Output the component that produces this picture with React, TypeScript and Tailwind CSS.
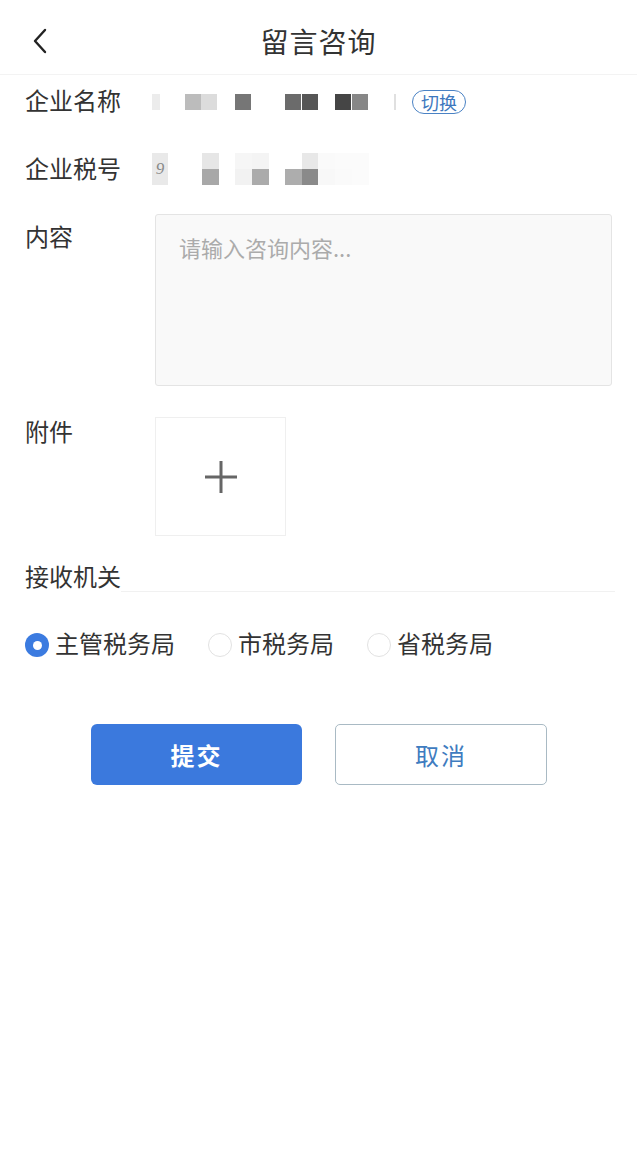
import React from "react";

const FONT = { fontFamily: '"Noto Sans CJK SC", "Noto Sans", sans-serif' };

// pixelated (redacted) blocks: [left, color]
const nameBlocks: [number, string][] = [
  [152, "#ececec"],
  [185, "#bcbcbc"],
  [201, "#dcdcdc"],
  [235, "#767676"],
  [285, "#6b6b6b"],
  [302, "#565656"],
  [335, "#454545"],
  [352, "#878787"],
];

const taxTop: [number, string][] = [
  [202, "#e6e6e6"],
  [235, "#f6f6f6"],
  [252, "#f4f4f4"],
  [302, "#e8e8e8"],
  [318, "#fafafa"],
  [335, "#fbfbfb"],
  [352, "#fbfbfb"],
];
const taxBottom: [number, string][] = [
  [202, "#a8a8a8"],
  [235, "#f2f2f2"],
  [252, "#ababab"],
  [285, "#adadad"],
  [302, "#8a8a8a"],
  [318, "#f8f8f8"],
  [335, "#fafafa"],
  [352, "#fbfbfb"],
];

function Radio({ checked, label }: { checked?: boolean; label: string }) {
  return (
    <div className="flex items-center gap-[6px]">
      {checked ? (
        <span className="w-[24px] h-[24px] rounded-full bg-[#3b7be0] flex items-center justify-center">
          <span className="w-[9px] h-[9px] rounded-full bg-white" />
        </span>
      ) : (
        <span className="w-[24px] h-[24px] rounded-full border border-[#e2e2e2] bg-white" />
      )}
      <span className="text-[24px] leading-[30px] text-[#333] mt-[-4px]">{label}</span>
    </div>
  );
}

export default function App() {
  return (
    <div className="w-[637px] h-[1158px] bg-white text-[#333] relative" style={FONT}>
      {/* header */}
      <div className="h-[75px] flex items-center px-[26px] border-b border-[#f3f3f3] relative">
        <svg width="20" height="26" viewBox="0 0 20 26" className="ml-[5px] mt-[8px]">
          <path d="M14 2 L4 13 L14 24" fill="none" stroke="#222" strokeWidth="2.4" strokeLinecap="round" strokeLinejoin="round" />
        </svg>
        <div className="absolute left-0 right-0 top-0 h-[75px] flex items-center justify-center pointer-events-none">
          <span className="text-[28px] leading-[34px] text-[#333] mt-[6px] tracking-[1px]">留言咨询</span>
        </div>
      </div>

      {/* 企业名称 */}
      <div className="h-[53px] flex items-center pl-[25px]">
        <span className="w-[130px] text-[24px] leading-[30px] mt-[-3px]">企业名称</span>
        <div className="relative h-[16px] w-[245px]">
          {nameBlocks.map(([x, c]) => (
            <span
              key={x}
              className="absolute top-0 h-[16px] w-[16px]"
              style={{ left: x - 155, backgroundColor: c, width: x === 152 ? 8 : 16 }}
            />
          ))}
          <span className="absolute top-0 h-[16px] w-[2px] bg-[#e0e0e0]" style={{ left: 394 - 155 }} />
        </div>
        <span className="ml-[12px] px-[8px] h-[24px] flex items-center rounded-full border border-[#4a82c4] text-[#3d78be] text-[18px] leading-none">
          切换
        </span>
      </div>

      {/* 企业税号 */}
      <div className="h-[84px] flex items-center pl-[25px]">
        <span className="w-[130px] text-[24px] leading-[30px] mt-[-5px]">企业税号</span>
        <div className="relative h-[32px] w-[230px] -ml-[3px] mt-[-2px]">
          <span className="absolute left-0 top-0 w-[16px] h-[32px] bg-[#e9e9e9] text-[#888] text-[17px] flex items-center justify-center italic" style={{ fontFamily: '"Liberation Serif", serif' }}>
            9
          </span>
          {taxTop.map(([x, c]) => (
            <span key={"t" + x} className="absolute top-0 h-[16px] w-[17px]" style={{ left: x - 152, backgroundColor: c }} />
          ))}
          {taxBottom.map(([x, c]) => (
            <span key={"b" + x} className="absolute top-[16px] h-[16px] w-[17px]" style={{ left: x - 152, backgroundColor: c }} />
          ))}
        </div>
      </div>

      {/* 内容 */}
      <div className="flex pl-[25px] mt-[2px]">
        <span className="w-[130px] text-[24px] leading-[30px] mt-[7px]">内容</span>
        <div className="w-[457px] h-[172px] bg-[#f9f9f9] border border-[#e4e4e4] rounded-[3px] px-[23px] pt-[17px]">
          <span className="text-[22px] leading-[30px] text-[#ababab]">请输入咨询内容...</span>
        </div>
      </div>

      {/* 附件 */}
      <div className="flex pl-[25px] mt-[31px]">
        <span className="w-[130px] text-[24px] leading-[30px] mt-[-1px]">附件</span>
        <div className="w-[131px] h-[119px] border border-[#efefef] flex items-center justify-center">
          <svg width="34" height="34" viewBox="0 0 34 34">
            <path d="M17 1 V33 M1 17 H33" stroke="#666" strokeWidth="3" />
          </svg>
        </div>
      </div>

      {/* 接收机关 */}
      <div className="flex items-end pl-[25px] mt-[25px]">
        <span className="text-[24px] leading-[30px]">接收机关</span>
        <div className="flex-1 mr-[22px] border-b border-[#f1f1f1] mb-[-1px]" />
      </div>

      {/* radios */}
      <div className="flex items-center pl-[25px] mt-[41px] gap-[33px]">
        <Radio checked label="主管税务局" />
        <Radio label="市税务局" />
        <Radio label="省税务局" />
      </div>

      {/* buttons */}
      <div className="flex justify-center gap-[33px] mt-[66px] pl-[1px]">
        <button className="w-[211px] h-[61px] rounded-[6px] bg-[#3b79dd] text-white text-[24px] font-bold tracking-[2px]">
          提交
        </button>
        <button className="w-[212px] h-[61px] rounded-[5px] border border-[#a9bac4] bg-white text-[#3f7cc0] text-[24px] tracking-[2px]">
          取消
        </button>
      </div>
    </div>
  );
}
